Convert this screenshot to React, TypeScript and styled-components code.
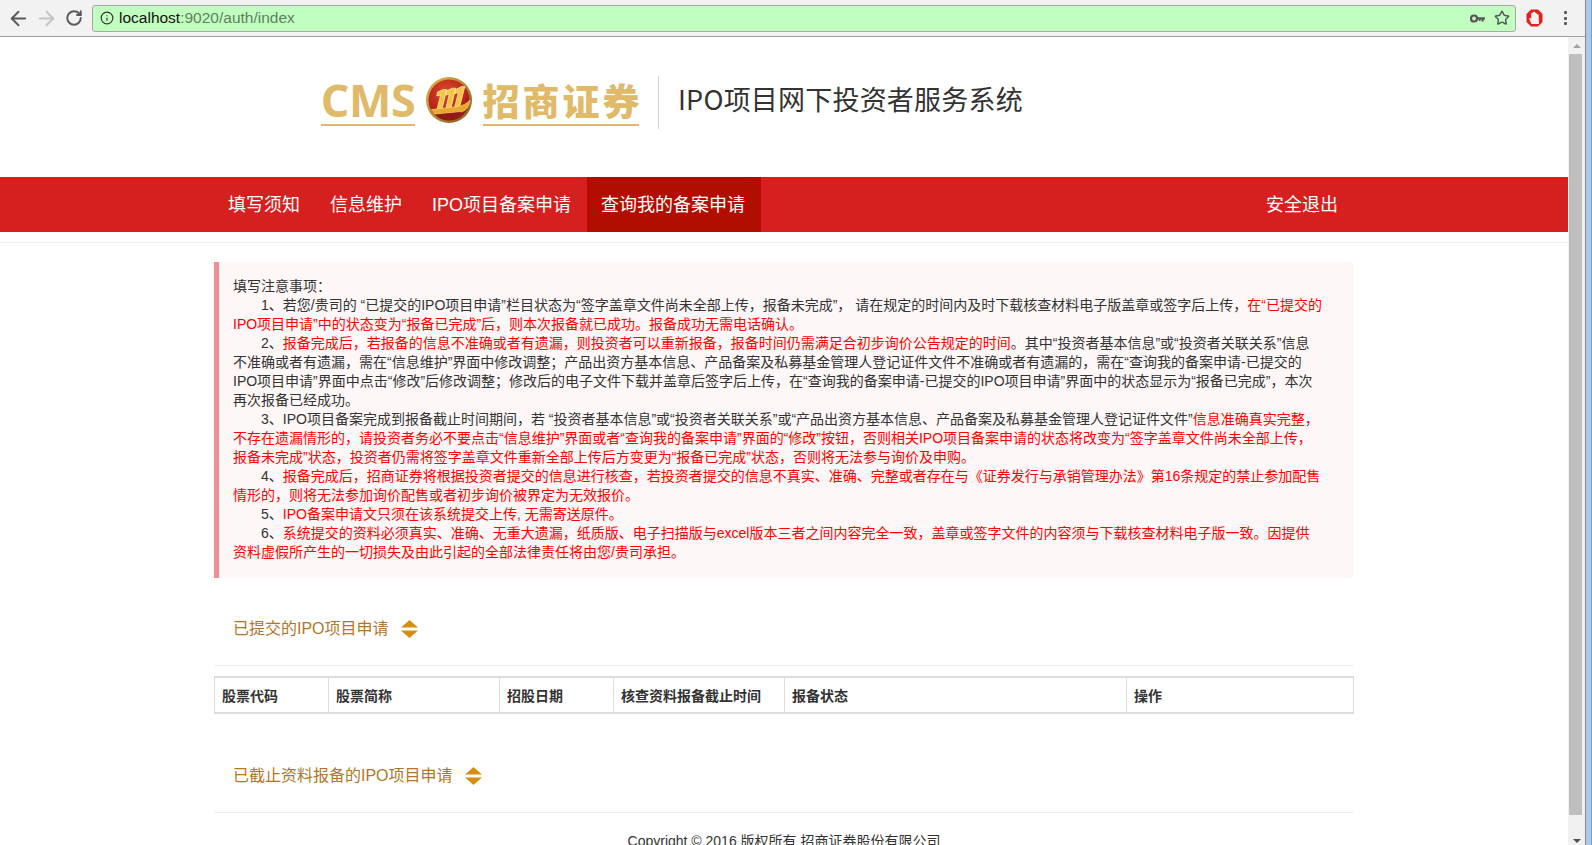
import React from 'react';
import styled, { createGlobalStyle } from 'styled-components';
import { ArrowLeft, ArrowRight, RotateCw, Info, Star } from 'lucide-react';

const Global = createGlobalStyle`
  html, body { margin: 0; padding: 0; height: 100%; overflow: hidden; background: #fff; }
  body { font-family: "Liberation Sans", "Noto Sans CJK SC", sans-serif; color: #333; }
`;

const Frame = styled.div`
  width: 1592px; height: 845px; display: flex; overflow: hidden; background: #fff;
`;
const WindowColumn = styled.div`
  width: 1585px; height: 845px; display: flex; flex-direction: column; flex: none;
`;
const WindowEdge = styled.div`
  width: 7px; height: 845px; flex: none;
  background: #a9c9ec;
  border-left: 1px solid #8a8a8a;
  border-right: 1px solid #7f9db9;
  box-sizing: border-box;
`;
const Toolbar = styled.div`
  height: 37px; flex: none; background: #f2f2f2; border-bottom: 1px solid #a0a0a0; box-sizing: border-box;
  display: flex; align-items: center;
`;
const NavIcon = styled.span<{ $w: number; $c: string }>`
  width: ${p => p.$w}px; display: flex; justify-content: center; align-items: center; color: ${p => p.$c}; flex: none;
`;
const NavIcons = styled.div`
  display: flex; align-items: center; padding-left: 5px; width: 92px; box-sizing: border-box; flex: none;
`;
const AddressBar = styled.div`
  width: 1424px; height: 27px; box-sizing: border-box; flex: none;
  background: #c1ffc1; border: 1px solid #a7a7a7; border-radius: 3px;
  display: flex; align-items: center; padding: 0 5px 0 7px; gap: 5px;
`;
const Url = styled.div`
  font-size: 15.5px; color: #111; flex: 1; white-space: nowrap;
`;
const UrlRest = styled.span`color: #5f7f5f;`;
const AddrIcons = styled.div`display: flex; align-items: center; gap: 9px; color: #555;`;
const ToolbarRight = styled.div`
  flex: 1; display: flex; align-items: center; justify-content: space-between; padding: 0 18px 0 10px;
`;
const Dots = styled.div`
  display: flex; flex-direction: column; gap: 2.5px;
  span { width: 3px; height: 3px; background: #5a5a5a; border-radius: 1px; display: block; }
`;
const Body = styled.div`
  flex: 1; display: flex; min-height: 0;
`;
const Page = styled.div`
  width: 1568px; flex: none; overflow: hidden; background: #fff;
`;
const Scrollbar = styled.div`
  width: 17px; flex: none; background: #f1f1f1; display: flex; flex-direction: column; overflow: hidden;
`;
const ScrollBtn = styled.div<{ $h: number }>`
  height: ${p => p.$h}px; width: 100%; display: flex; align-items: center; justify-content: center; flex: none;
`;
const Thumb = styled.div`
  width: 13px; height: 761px; background: #bfbfbf; flex: none; margin-left: 1px;
`;
const ScrollSpacer = styled.div`flex: 1;`;
const Tri = styled.div<{ $down?: boolean }>`
  width: 0; height: 0; border-left: 4px solid transparent; border-right: 4px solid transparent;
  ${p => p.$down ? 'border-top: 4px solid #505050;' : 'border-bottom: 4px solid #a3a3a3;'}
`;
const Brand = styled.header`
  height: 140px; display: flex; align-items: flex-start; padding: 39px 0 0 321px; box-sizing: border-box;
`;
const LogoWord = styled.div<{ $w: number }>`
  width: ${p => p.$w}px; border-bottom: 2px solid #e0ba69; height: 48px; padding-bottom: 0;
  color: #e0ba69; display: flex; justify-content: center; align-items: center; white-space: nowrap;
`;
const CmsText = styled.span`
  font-family: "Open Sans", sans-serif; font-weight: 700; font-size: 45px; line-height: 48px; letter-spacing: -0.5px;
`;
const ZhText = styled.span`
  font-family: "Noto Sans CJK SC", sans-serif; font-weight: 900; font-size: 37px; line-height: 48px; letter-spacing: 3px; margin-right: -3px;
`;
const Emblem = styled.div`
  width: 68px; height: 48px; display: flex; align-items: center; justify-content: center; flex: none;
`;
const Divider = styled.div`
  width: 1px; height: 53px; background: #d4d4d4; margin: 0 19px; flex: none;
`;
const SiteTitle = styled.h1`
  margin: 0; font-family: "Noto Sans CJK SC", sans-serif; font-weight: 400; font-size: 27px; letter-spacing: 0.2px; line-height: 45px; color: #333; white-space: nowrap;
`;
const Nav = styled.nav`
  height: 55px; background: #d5201f; display: flex; justify-content: center;
`;
const NavInner = styled.div`
  width: 1140px; display: flex; justify-content: space-between;
`;
const NavGroup = styled.div`display: flex;`;
const NavItem = styled.a<{ $active?: boolean }>`
  padding: 2px 16px 0 14px; font-size: 18px; line-height: 53px; color: #fff; white-space: nowrap;
  background: ${p => p.$active ? '#b10d00' : 'transparent'};
`;
const NavRule = styled.div`
  height: 1px; background: #eee; margin-top: 10px;
`;
const Container = styled.main`
  width: 1140px; margin: 0 auto;
`;
const Callout = styled.section`
  margin-top: 19px; padding: 15px 25px 16px 14px; background: #fdf7f7; border-left: 5px solid #f58b93;
  border-radius: 0 3px 3px 0; font-size: 14px; line-height: 19px; color: #333;
`;
const Para = styled.p`
  margin: 0; white-space: nowrap;
`;
const Numbered = styled(Para)`
  text-indent: 28px;
`;
const Red = styled.span`color: #f00;`;
const SectionHead = styled.div`
  height: 88px; display: flex; align-items: center; padding: 14px 0 0 19px; gap: 12px; border-bottom: 1px solid #eee;
  box-sizing: border-box;
`;
const SectionTitle = styled.h2`
  margin: 0; font-size: 16px; font-weight: 400; color: #b3762a; line-height: 20px; white-space: nowrap;
`;
const SortIcon = styled.svg`width: 17px; height: 18px; flex: none;`;
const Table = styled.table`
  width: 100%; margin-top: 10px; border-collapse: collapse; table-layout: fixed;
`;
const Th = styled.th<{ $w?: number }>`
  ${p => p.$w ? `width: ${p.$w}px;` : ''}
  height: 36px; padding: 0 7px; text-align: left; font-size: 14px; font-weight: 700; color: #333;
  border: 1px solid #ddd; border-top-width: 2px; border-bottom-width: 2px; box-sizing: border-box;
`;
const TableGap = styled.div`height: 11px;`;
const Footer = styled.footer`
  text-align: center; font-size: 14px; line-height: 20px; padding-top: 18px; color: #333; white-space: nowrap;
`;

const Logo = () => (
  <svg width="48" height="48" viewBox="0 0 48 48">
    <defs>
      <radialGradient id="ball" cx="42%" cy="30%" r="75%">
        <stop offset="0%" stopColor="#dd4a26" />
        <stop offset="65%" stopColor="#b7221b" />
        <stop offset="100%" stopColor="#8a1616" />
      </radialGradient>
      <linearGradient id="ring" x1="0" y1="0" x2="1" y2="1">
        <stop offset="0%" stopColor="#e6b94a" />
        <stop offset="100%" stopColor="#7d5a1c" />
      </linearGradient>
    </defs>
    <circle cx="24" cy="24" r="23" fill="url(#ring)" />
    <circle cx="24" cy="24" r="20.5" fill="url(#ball)" />
    <g fill="#f4c63f" stroke="#fff6d2" strokeWidth="0.7" strokeLinejoin="round">
      <path d="M12.5 16 L18.5 13.5 L21.6 13.5 L17.2 33 L12 33.6 L15.5 19 L11.8 20 Z" />
      <path d="M21.5 15 L27.3 12.2 L30.6 12.2 L26 32.4 L20.7 33 L24.3 18 L20.8 19 Z" />
      <path d="M30.5 13.5 L36.6 10.6 L39.8 10.6 L35 29.6 L29.5 31.6 L33.4 16.6 L29.8 17.6 Z" />
    </g>
    <path d="M6.5 33.5 L33 30.5 C38 29.6 42 27.3 45 24 C44.6 30 41 35.2 36 36 L10 38.4 Z" fill="#e9a92c" stroke="#fbe39a" strokeWidth="0.5" />
    <path d="M10 38.4 L36 36 C32 41 28 43.5 24 43.5 C18 43.5 13 41.5 10 38.4 Z" fill="#8f1a16" />
  </svg>
);

const Sort = () => (
  <SortIcon viewBox="0 0 17 18">
    <path d="M8.5 0 L17 7.5 L0 7.5 Z" fill="#d68f0c" />
    <path d="M0 10.5 L17 10.5 L8.5 18 Z" fill="#d68f0c" />
  </SortIcon>
);

const KeyIcon = () => (
  <svg width="15" height="9" viewBox="0 0 15 9">
    <circle cx="4" cy="4.5" r="3" fill="none" stroke="#555" strokeWidth="2.2" />
    <path d="M6.5 3.3 H15 V5.5 H13.6 V7.6 H11.6 V5.5 H10.6 V7 H8.8 V5.5 H6.5 Z" fill="#555" />
  </svg>
);

const StopIcon = () => (
  <svg width="17" height="18" viewBox="0 0 17 18">
    <path d="M5 0.5 H12 L16.5 5 V13 L12 17.5 H5 L0.5 13 V5 Z" fill="#e3201c" />
    <path d="M5.5 15 L3 9.6 L4.2 8.8 L5.2 10 V4.2 L6.6 4 V3 L8 2.7 L9.2 3 V3.8 L10.8 4.2 V5 L12.6 5.6 L13 15 Z" fill="#f6f0ee" />
  </svg>
);

const Columns: [string, number | undefined][] = [
  ['股票代码', 114],
  ['股票简称', 171],
  ['招股日期', 114],
  ['核查资料报备截止时间', 171],
  ['报备状态', 342],
  ['操作', undefined],
];

export default function App() {
  return (
    <>
      <Global />
      <Frame>
        <WindowColumn>
          <Toolbar>
            <NavIcons>
              <NavIcon $w={26} $c="#5a5a5a"><ArrowLeft size={23} strokeWidth={2} /></NavIcon>
              <NavIcon $w={30} $c="#c4c4c4"><ArrowRight size={23} strokeWidth={2} /></NavIcon>
              <NavIcon $w={26} $c="#5a5a5a"><RotateCw size={18} strokeWidth={2.6} /></NavIcon>
            </NavIcons>
            <AddressBar>
              <Info size={14} color="#333" strokeWidth={2} />
              <Url>localhost<UrlRest>:9020/auth/index</UrlRest></Url>
              <AddrIcons>
                <KeyIcon />
                <Star size={16} strokeWidth={2.2} />
              </AddrIcons>
            </AddressBar>
            <ToolbarRight>
              <StopIcon />
              <Dots><span /><span /><span /></Dots>
            </ToolbarRight>
          </Toolbar>
          <Body>
            <Page>
              <Brand>
                <LogoWord $w={94}><CmsText>CMS</CmsText></LogoWord>
                <Emblem><Logo /></Emblem>
                <LogoWord $w={156}><ZhText>招商证券</ZhText></LogoWord>
                <Divider />
                <SiteTitle>IPO项目网下投资者服务系统</SiteTitle>
              </Brand>
              <Nav>
                <NavInner>
                  <NavGroup>
                    <NavItem>填写须知</NavItem>
                    <NavItem>信息维护</NavItem>
                    <NavItem>IPO项目备案申请</NavItem>
                    <NavItem $active>查询我的备案申请</NavItem>
                  </NavGroup>
                  <NavItem>安全退出</NavItem>
                </NavInner>
              </Nav>
              <NavRule />
              <Container>
                <Callout>
                  <Para>填写注意事项：</Para>
                  <Numbered>1、若您/贵司的 “已提交的IPO项目申请”栏目状态为“签字盖章文件尚未全部上传，报备未完成”， 请在规定的时间内及时下载核查材料电子版盖章或签字后上传，<Red>在“已提交的</Red></Numbered>
                  <Para><Red>IPO项目申请”中的状态变为“报备已完成”后，则本次报备就已成功。报备成功无需电话确认。</Red></Para>
                  <Numbered>2、<Red>报备完成后，若报备的信息不准确或者有遗漏，则投资者可以重新报备，报备时间仍需满足合初步询价公告规定的时间</Red>。其中“投资者基本信息”或“投资者关联关系”信息</Numbered>
                  <Para>不准确或者有遗漏，需在“信息维护”界面中修改调整；产品出资方基本信息、产品备案及私募基金管理人登记证件文件不准确或者有遗漏的，需在“查询我的备案申请-已提交的</Para>
                  <Para>IPO项目申请”界面中点击“修改”后修改调整；修改后的电子文件下载并盖章后签字后上传，在“查询我的备案申请-已提交的IPO项目申请”界面中的状态显示为“报备已完成”，本次</Para>
                  <Para>再次报备已经成功。</Para>
                  <Numbered>3、IPO项目备案完成到报备截止时间期间，若 “投资者基本信息”或“投资者关联关系”或“产品出资方基本信息、产品备案及私募基金管理人登记证件文件”<Red>信息准确真实完整，</Red></Numbered>
                  <Para><Red>不存在遗漏情形的，请投资者务必不要点击“信息维护”界面或者“查询我的备案申请”界面的“修改”按钮，否则相关IPO项目备案申请的状态将改变为“签字盖章文件尚未全部上传，</Red></Para>
                  <Para><Red>报备未完成”状态，投资者仍需将签字盖章文件重新全部上传后方变更为“报备已完成”状态，否则将无法参与询价及申购。</Red></Para>
                  <Numbered>4、<Red>报备完成后，招商证券将根据投资者提交的信息进行核查，若投资者提交的信息不真实、准确、完整或者存在与《证券发行与承销管理办法》第16条规定的禁止参加配售</Red></Numbered>
                  <Para><Red>情形的，则将无法参加询价配售或者初步询价被界定为无效报价。</Red></Para>
                  <Numbered>5、<Red>IPO备案申请文只须在该系统提交上传, 无需寄送原件。</Red></Numbered>
                  <Numbered>6、<Red>系统提交的资料必须真实、准确、无重大遗漏，纸质版、电子扫描版与excel版本三者之间内容完全一致，盖章或签字文件的内容须与下载核查材料电子版一致。因提供</Red></Numbered>
                  <Para><Red>资料虚假所产生的一切损失及由此引起的全部法律责任将由您/贵司承担。</Red></Para>
                </Callout>
                <SectionHead>
                  <SectionTitle>已提交的IPO项目申请</SectionTitle>
                  <Sort />
                </SectionHead>
                <Table>
                  <thead>
                    <tr>
                      {Columns.map(([label, w]) => <Th key={label} $w={w}>{label}</Th>)}
                    </tr>
                  </thead>
                </Table>
                <TableGap />
                <SectionHead>
                  <SectionTitle>已截止资料报备的IPO项目申请</SectionTitle>
                  <Sort />
                </SectionHead>
                <Footer>Copyright © 2016 版权所有 招商证券股份有限公司</Footer>
              </Container>
            </Page>
            <Scrollbar>
              <ScrollBtn $h={17}><Tri /></ScrollBtn>
              <Thumb />
              <ScrollSpacer />
              <ScrollBtn $h={8}><Tri $down /></ScrollBtn>
            </Scrollbar>
          </Body>
        </WindowColumn>
        <WindowEdge />
      </Frame>
    </>
  );
}
